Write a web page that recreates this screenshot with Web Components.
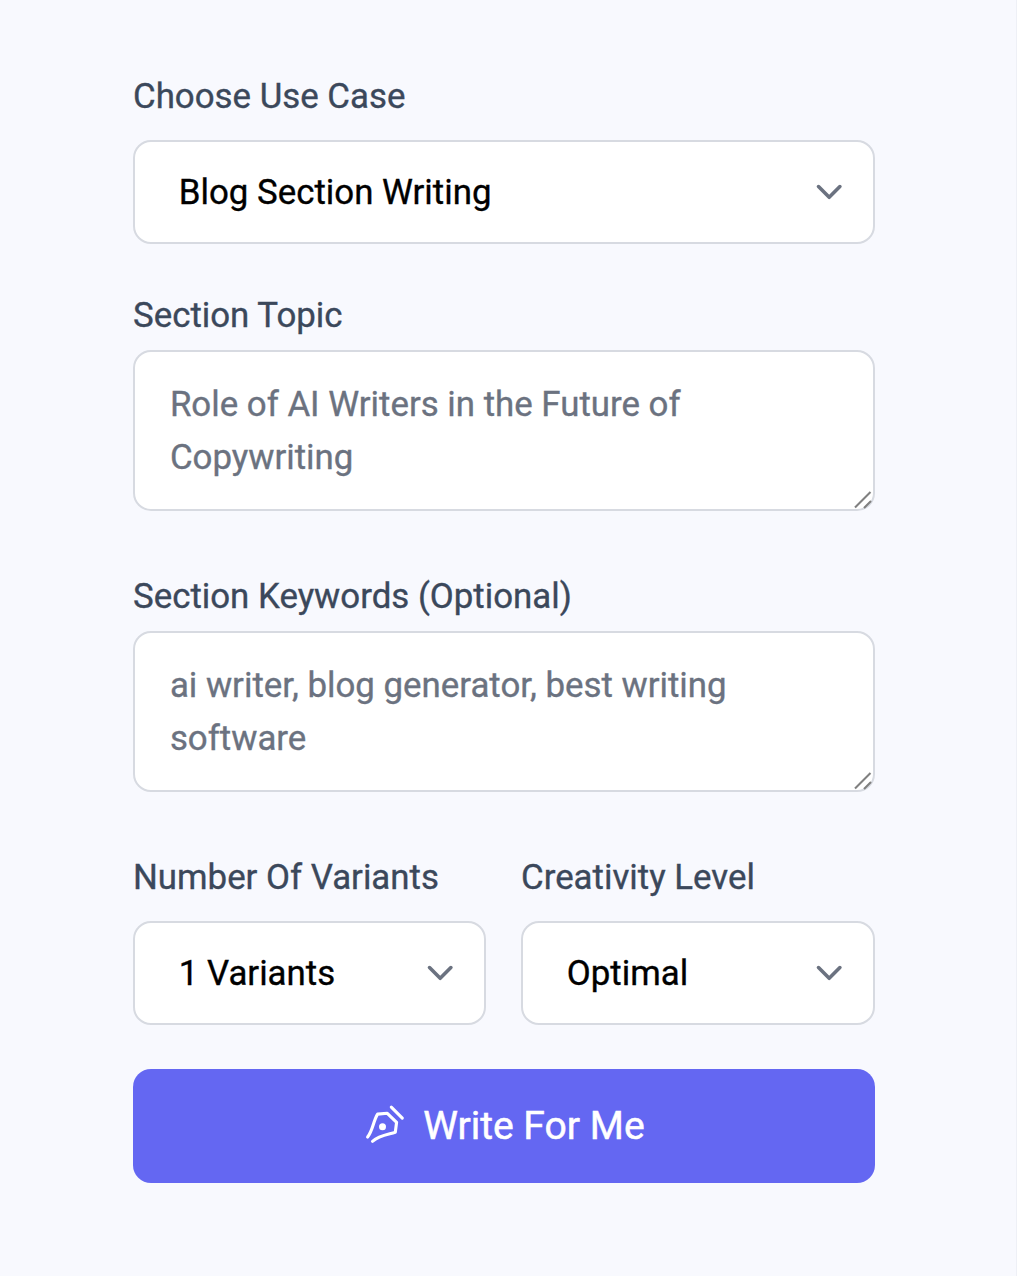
<!DOCTYPE html>
<html lang="en">
<head>
<meta charset="utf-8">
<title>Write For Me</title>
<style>
html,body{margin:0;padding:0}
body{background:#f8f9fe;font-family:Roboto,"Liberation Sans",sans-serif}
</style>
</head>
<body>
<writer-form></writer-form>
<script>
const define = (name, html) => customElements.define(name, class extends HTMLElement {
  constructor() {
    super();
    const t = document.createElement('template');
    t.innerHTML = html;
    this.attachShadow({mode: 'open'}).append(t.content.cloneNode(true));
  }
});

define('form-field', `<style>
:host{display:flex;flex-direction:column;gap:var(--gap,17px);min-width:0}
.label{font-size:34.85px;line-height:52px;color:#3b485b;white-space:nowrap;-webkit-text-stroke:.35px currentColor}
</style><div class="label"><slot name="label"></slot></div><slot></slot>`);

define('select-box', `<style>
:host{display:flex;align-items:center;justify-content:space-between;box-sizing:border-box;height:104px;padding:0 30px 0 43.8px;border:2px solid #d7dae1;border-radius:18px;background:#fff;color:#000;font-size:34.85px;line-height:52px;white-space:nowrap}
span{-webkit-text-stroke:.35px currentColor;padding-top:2px}
svg{display:block;flex:none}
</style><span><slot></slot></span><svg width="28" height="18" viewBox="0 0 28 18" fill="none" stroke="#6b7280" stroke-width="3.6" stroke-linecap="round" stroke-linejoin="round"><path d="M3.5 3.6 14.2 14.3 24.9 3.6"/></svg>`);

define('text-area', `<style>
:host{display:block;position:relative;box-sizing:border-box;height:161px;padding:27px 34.9px 0;border:2px solid #d7dae1;border-radius:18px;background:#fff;color:#6b7280;font-size:34.85px;line-height:52.5px}
span{-webkit-text-stroke:.35px currentColor}
svg{position:absolute;right:0;bottom:-1px}
</style><span><slot></slot></span><svg width="20" height="20" viewBox="0 0 20 20" stroke="#808080" stroke-width="2.1"><path d="M2 17.5 17.5 2M11 18 18 11"/></svg>`);

define('write-button', `<style>
:host{display:flex;align-items:center;justify-content:center;gap:17.8px;box-sizing:border-box;height:114px;padding-bottom:2px;border-radius:18px;background:#6467f2;color:#fff;font-size:39.1px;white-space:nowrap}
span{-webkit-text-stroke:.5px currentColor;padding-top:2px}
svg{display:block;flex:none}
</style><svg width="42" height="42" viewBox="-0.8 0.2 42 42" fill="none" stroke="#fff" stroke-width="3.1" stroke-linecap="round" stroke-linejoin="round"><path d="M3.8 33.2C9 27 9.5 17 13.8 10.3L23.5 9.5 32.8 18.5 31.5 28.5C23 31 15 32 8.7 37.5M27.5 3.3 38.5 14.3"/><circle cx="18.7" cy="23" r="3.5" fill="#fff" stroke="none"/></svg><span><slot></slot></span>`);

define('writer-form', `<style>
:host{display:flex;flex-direction:column;box-sizing:border-box;width:1017px;height:1276px;padding:71px 141px 0 133px;border-right:1px solid #eef0f6}
.topic{--gap:8px;margin-top:46px}
.keys{--gap:8px;margin-top:60px}
.row{display:grid;grid-template-columns:353px 354px;gap:35px;margin-top:60px}
write-button{margin-top:44px}
</style>
<form-field><span slot="label">Choose Use Case</span><select-box>Blog Section Writing</select-box></form-field>
<form-field class="topic"><span slot="label">Section Topic</span><text-area>Role of AI Writers in the Future of Copywriting</text-area></form-field>
<form-field class="keys"><span slot="label">Section Keywords (Optional)</span><text-area>ai writer, blog generator, best writing software</text-area></form-field>
<div class="row">
<form-field><span slot="label">Number Of Variants</span><select-box>1 Variants</select-box></form-field>
<form-field><span slot="label">Creativity Level</span><select-box>Optimal</select-box></form-field>
</div>
<write-button>Write For Me</write-button>`);
</script>
</body>
</html>
